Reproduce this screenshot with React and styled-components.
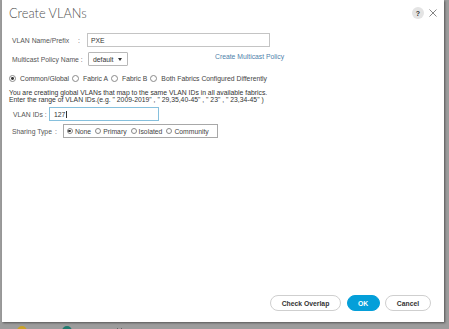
import React from "react";
import styled, { createGlobalStyle } from "styled-components";

const GlobalStyle = createGlobalStyle`
  html, body { margin: 0; padding: 0; }
  body {
    width: 449px;
    height: 329px;
    overflow: hidden;
    background: #9c9c9c;
    font-family: "Liberation Sans", Arial, sans-serif;
  }
`;

const Page = styled.div`
  width: 449px;
  height: 329px;
  display: flex;
  flex-direction: column;
  overflow: hidden;
`;

const Dialog = styled.div`
  width: 442px;
  height: 322px;
  margin-left: 2px;
  background: #fff;
  display: flex;
  flex-direction: column;
  box-shadow: 1px 1px 2px rgba(0, 0, 0, 0.45);
  flex-shrink: 0;
`;

const Header = styled.div`
  height: 26px;
  display: flex;
  align-items: center;
  justify-content: space-between;
  padding: 0 7px 0 7px;
`;

const Title = styled.h1`
  margin: 0;
  font-family: Lato, "Liberation Sans", sans-serif;
  font-weight: 300;
  font-size: 12.8px;
  color: #4f4f4f;
`;

const HeaderIcons = styled.div`
  display: flex;
  align-items: center;
  gap: 5px;
`;

const Help = styled.span`
  width: 12px;
  height: 12px;
  border-radius: 50%;
  background: #e4e4e4;
  color: #333;
  font-size: 7px;
  font-weight: bold;
  display: flex;
  align-items: center;
  justify-content: center;
`;

const Body = styled.div`
  padding: 7px 0 0 7px;
  display: flex;
  flex-direction: column;
  font-size: 6.8px;
  color: #555;
`;

const FieldRow = styled.div`
  display: flex;
  align-items: center;
  margin-top: ${(p) => p.$mt || 0}px;
  padding-left: ${(p) => p.$pl || 0}px;
`;

const Label = styled.span`
  width: ${(p) => p.$w}px;
  white-space: nowrap;
  color: #555;
`;

const Colon = styled.span`
  margin-right: ${(p) => p.$mr || 0}px;
  color: #555;
`;

const TextInput = styled.div`
  width: ${(p) => p.$w}px;
  height: ${(p) => p.$h}px;
  margin-left: ${(p) => p.$ml || 0}px;
  box-sizing: border-box;
  border: 1px solid ${(p) => (p.$focus ? "#86c0dd" : "#c4c4c4")};
  display: flex;
  align-items: center;
  padding-left: ${(p) => p.$pad}px;
  color: #333;
`;

const Caret = styled.span`
  display: inline-block;
  width: 1px;
  height: 7px;
  background: #333;
  margin-left: 0.5px;
`;

const Select = styled.div`
  width: 40px;
  height: 14px;
  box-sizing: border-box;
  border: 1px solid #b8b8b8;
  border-radius: 1px;
  display: flex;
  align-items: center;
  padding-left: 4px;
  gap: 5px;
  color: #333;
  margin-left: 5px;
`;

const Arrow = styled.span`
  width: 0;
  height: 0;
  border-left: 2px solid transparent;
  border-right: 2px solid transparent;
  border-top: 3px solid #333;
`;

const Link = styled.a`
  margin-left: 87px;
  align-self: flex-start;
  margin-top: 1px;
  color: #4f7fab;
  text-decoration: none;
  white-space: nowrap;
`;

const RadioRow = styled.div`
  display: flex;
  align-items: center;
  gap: 3px;
  margin-top: 9px;
`;

const RadioItem = styled.label`
  display: flex;
  align-items: center;
  gap: ${(p) => p.$gap}px;
  white-space: nowrap;
  color: #444;
`;

const RadioDot = styled.span`
  width: ${(p) => p.$size}px;
  height: ${(p) => p.$size}px;
  box-sizing: border-box;
  border-radius: 50%;
  border: 0.8px solid #8a8a8a;
  display: flex;
  align-items: center;
  justify-content: center;
  flex-shrink: 0;
  &::after {
    content: "";
    width: 2.8px;
    height: 2.8px;
    border-radius: 50%;
    background: ${(p) => (p.$on ? "#333" : "transparent")};
  }
`;

const Info = styled.p`
  margin: 7px 0 0 0;
  line-height: 7px;
  color: #333;
  white-space: nowrap;
`;

const SharingBox = styled.div`
  width: 155px;
  height: 14px;
  box-sizing: border-box;
  border: 1px solid #a8a8a8;
  display: flex;
  align-items: center;
  padding-left: 3px;
  gap: 4px;
`;

const Footer = styled.div`
  margin-top: auto;
  display: flex;
  justify-content: flex-end;
  align-items: center;
  gap: 5.5px;
  padding: 0 13px 11px 0;
`;

const Button = styled.button`
  height: 16px;
  width: ${(p) => p.$w}px;
  border-radius: 8px;
  border: 1px solid ${(p) => (p.$primary ? "#049fd9" : "#cfcfcf")};
  background: ${(p) => (p.$primary ? "#049fd9" : "#fff")};
  color: ${(p) => (p.$primary ? "#fff" : "#333")};
  font-family: "Liberation Sans", Arial, sans-serif;
  font-weight: bold;
  font-size: 6.8px;
  padding: 0;
  display: flex;
  align-items: center;
  justify-content: center;
`;

const Taskbar = styled.div`
  flex: 1;
  display: flex;
  align-items: flex-start;
  padding: 4px 0 0 17px;
  gap: 35px;
  overflow: hidden;
`;

const TaskIcon = styled.span`
  width: 10px;
  height: 10px;
  border-radius: 50%;
  background: ${(p) => p.$c};
  flex-shrink: 0;
`;

const TaskMark = styled.span`
  margin: 2px 0 0 10px;
  width: 3px;
  height: 4px;
  border-left: 1px solid #666;
  border-right: 1px solid #666;
`;

function Radio({ on, size = 6, gap = 4, children }) {
  return (
    <RadioItem $gap={gap}>
      <RadioDot $on={on} $size={size} />
      {children}
    </RadioItem>
  );
}

export default function App() {
  return (
    <Page>
      <GlobalStyle />
      <Dialog>
        <Header>
          <Title>Create VLANs</Title>
          <HeaderIcons>
            <Help>?</Help>
            <svg width="8" height="8" viewBox="0 0 8 8">
              <path d="M0.5 0.5 L7.5 7.5 M7.5 0.5 L0.5 7.5" stroke="#777" strokeWidth="0.9" fill="none" />
            </svg>
          </HeaderIcons>
        </Header>
        <Body>
          <FieldRow $pl={3}>
            <Label $w={66}>VLAN Name/Prefix</Label>
            <Colon $mr={7}>:</Colon>
            <TextInput $w={183} $h={14} $pad={3}>PXE</TextInput>
          </FieldRow>
          <FieldRow $pl={3} $mt={5}>
            <Label $w={71}>Multicast Policy Name :</Label>
            <Select>
              default <Arrow />
            </Select>
            <Link href="#">Create Multicast Policy</Link>
          </FieldRow>
          <RadioRow>
            <Radio on size={7}>Common/Global</Radio>
            <Radio size={7}>Fabric A</Radio>
            <Radio size={7}>Fabric B</Radio>
            <Radio size={7}>Both Fabrics Configured Differently</Radio>
          </RadioRow>
          <Info>
            You are creating global VLANs that map to the same VLAN IDs in all available fabrics.
            <br />
            Enter the range of VLAN IDs.(e.g. " 2009-2019" , " 29,35,40-45" , " 23" , " 23,34-45" )
          </Info>
          <FieldRow $pl={4} $mt={4}>
            <Label $w={31}>VLAN IDs :</Label>
            <TextInput $w={110} $h={14} $pad={4} $ml={5} $focus>
              127<Caret />
            </TextInput>
          </FieldRow>
          <FieldRow $pl={3} $mt={3}>
            <Label $w={43}>Sharing Type</Label>
            <Colon $mr={6}>:</Colon>
            <SharingBox>
              <Radio on gap={2}>None</Radio>
              <Radio gap={2}>Primary</Radio>
              <Radio gap={2}>Isolated</Radio>
              <Radio gap={2}>Community</Radio>
            </SharingBox>
          </FieldRow>
        </Body>
        <Footer>
          <Button $w={71}>Check Overlap</Button>
          <Button $w={33} $primary>OK</Button>
          <Button $w={46}>Cancel</Button>
        </Footer>
      </Dialog>
      <Taskbar>
        <TaskIcon $c="#c9a227" />
        <TaskIcon $c="#1f7a6e" />
        <TaskMark />
      </Taskbar>
    </Page>
  );
}
